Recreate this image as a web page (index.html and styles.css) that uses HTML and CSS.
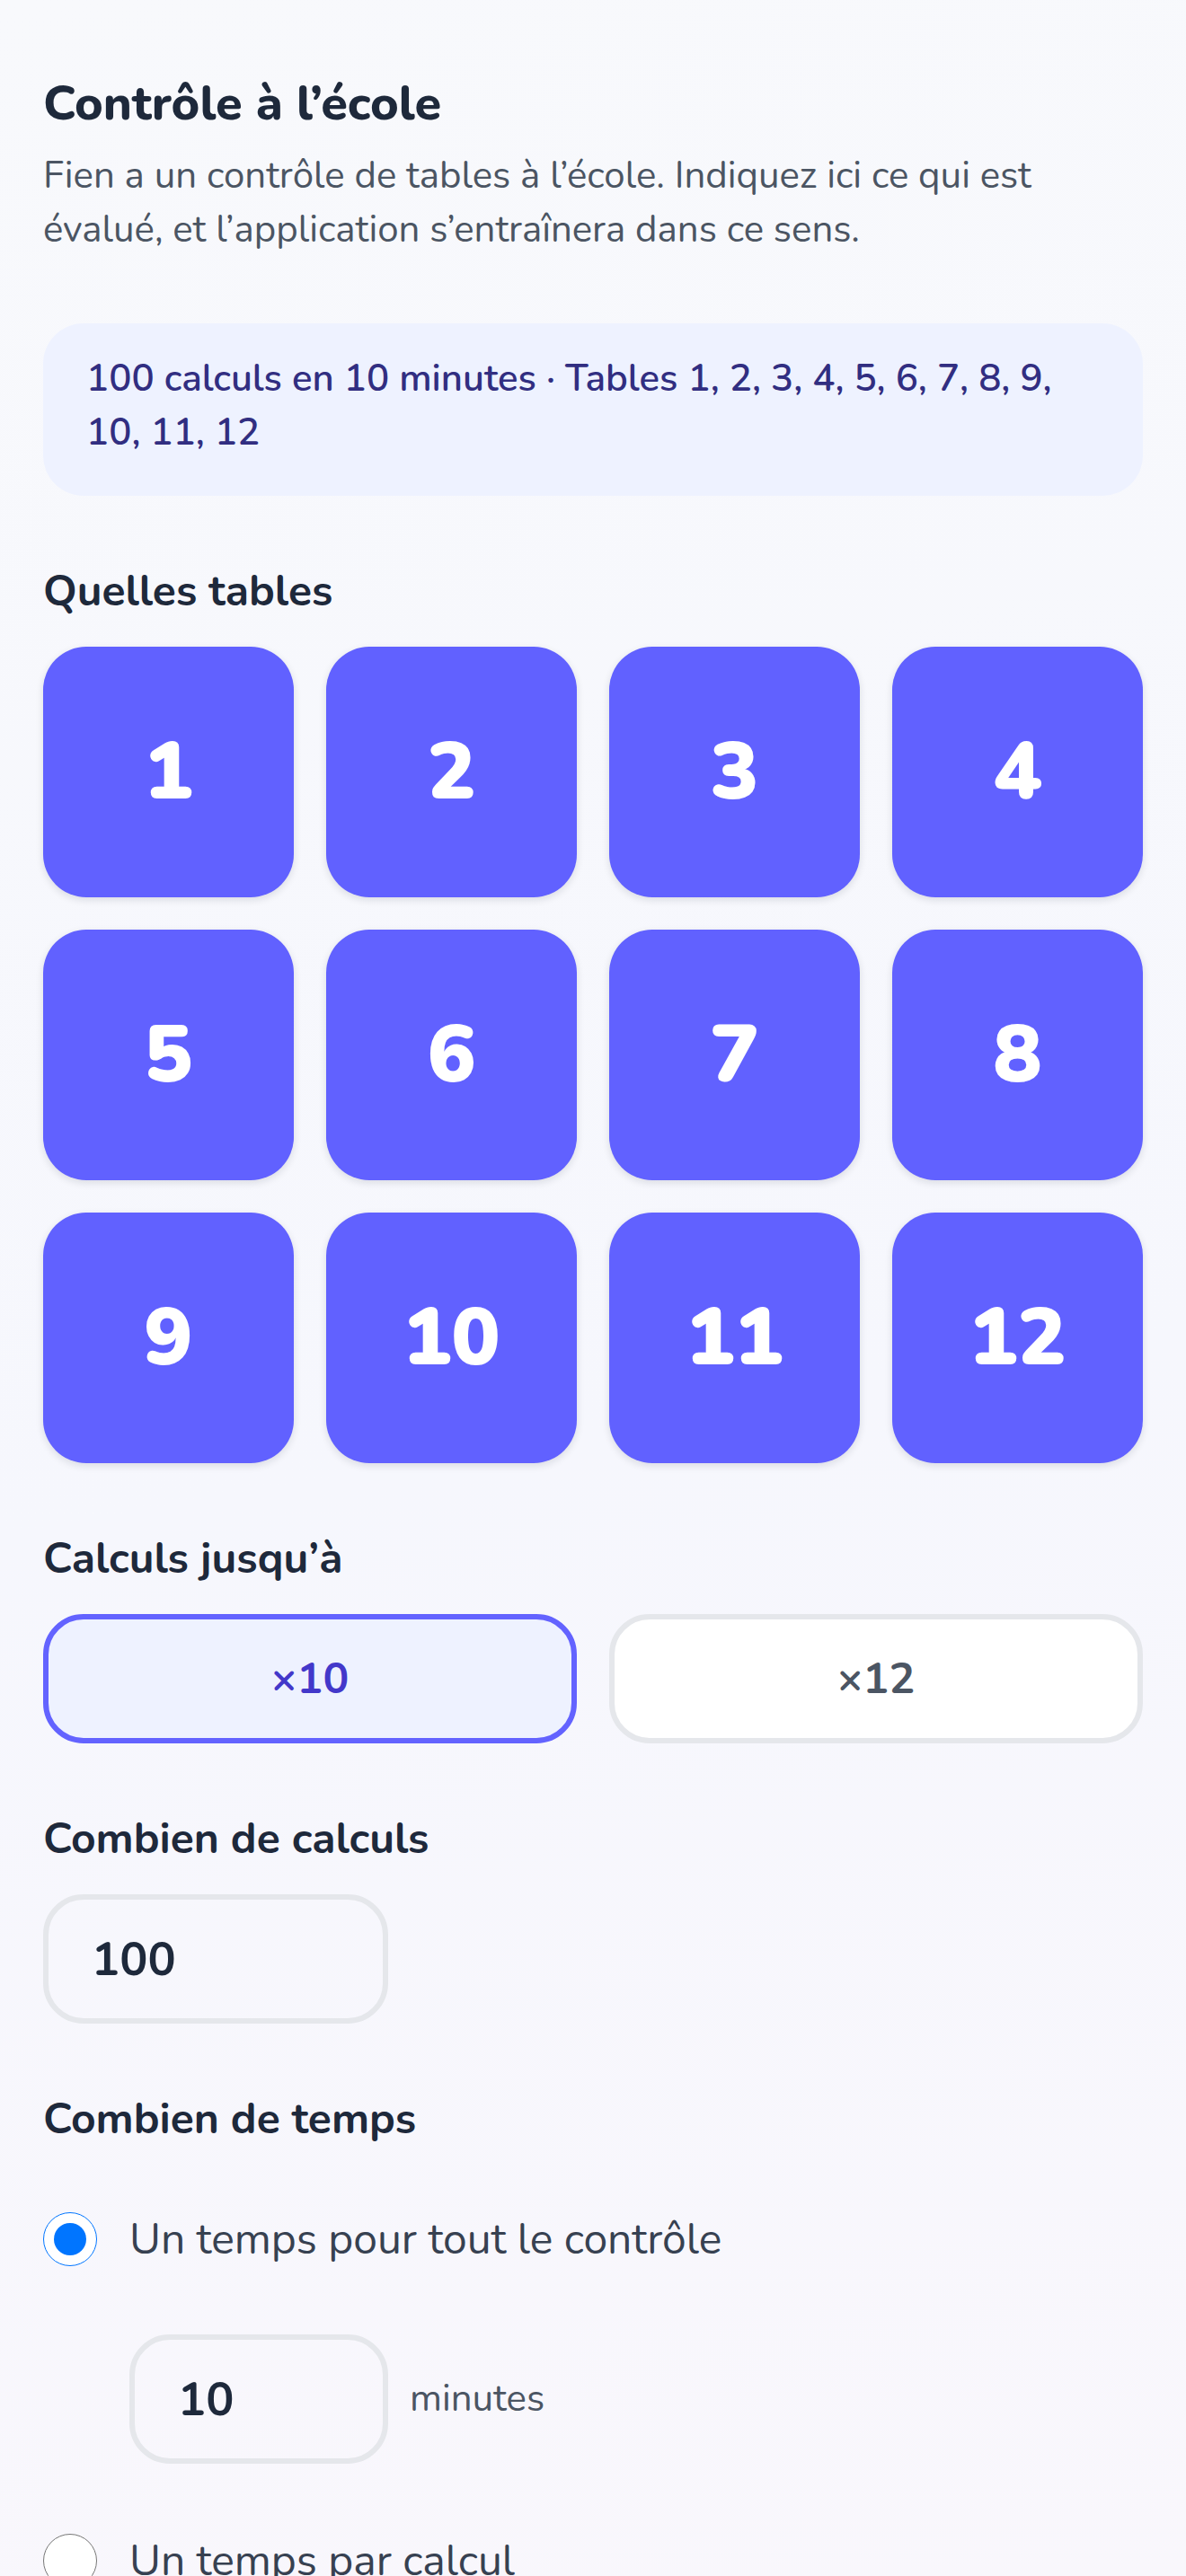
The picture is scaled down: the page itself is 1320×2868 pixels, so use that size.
FILE: index.html
```html
<!DOCTYPE html>
<html lang="fr">
<head>
<meta charset="utf-8">
<title>Contrôle à l’école</title>
<link rel="stylesheet" href="styles.css">
</head>
<body>
<main class="page">
  <h1 class="title">Contrôle à l’école</h1>
  <p class="intro">Fien a un contrôle de tables à l’école. Indiquez ici ce qui est évalué, et l’application s’entraînera dans ce sens.</p>

  <div class="summary">100 calculs en 10 minutes · Tables 1, 2, 3, 4, 5, 6, 7, 8, 9, 10, 11, 12</div>

  <section class="section">
    <h2 class="section-title">Quelles tables</h2>
    <div class="tables">
      <button class="table-btn" type="button">1</button>
      <button class="table-btn" type="button">2</button>
      <button class="table-btn" type="button">3</button>
      <button class="table-btn" type="button">4</button>
      <button class="table-btn" type="button">5</button>
      <button class="table-btn" type="button">6</button>
      <button class="table-btn" type="button">7</button>
      <button class="table-btn" type="button">8</button>
      <button class="table-btn" type="button">9</button>
      <button class="table-btn" type="button">10</button>
      <button class="table-btn" type="button">11</button>
      <button class="table-btn" type="button">12</button>
    </div>
  </section>

  <section class="section">
    <h2 class="section-title">Calculs jusqu’à</h2>
    <div class="choices">
      <button class="choice is-active" type="button">×10</button>
      <button class="choice" type="button">×12</button>
    </div>
  </section>

  <section class="section">
    <h2 class="section-title">Combien de calculs</h2>
    <input class="num-input" type="text" inputmode="numeric" value="100" aria-label="Combien de calculs">
  </section>

  <section class="section">
    <h2 class="section-title section-title--tight">Combien de temps</h2>
    <label class="radio-row">
      <input type="radio" name="mode" checked>
      <span>Un temps pour tout le contrôle</span>
    </label>
    <div class="duration">
      <input class="num-input num-input--small" type="text" inputmode="numeric" value="10" aria-label="Minutes">
      <span class="unit">minutes</span>
    </div>
    <label class="radio-row radio-row--next">
      <input type="radio" name="mode">
      <span>Un temps par calcul</span>
    </label>
  </section>
</main>
</body>
</html>
```

FILE: styles.css
```css
* {
  box-sizing: border-box;
}

html,
body {
  margin: 0;
}

body {
  min-height: 2868px;
  font-family: "Nunito", "Lato", sans-serif;
  color: #1e293b;
  background: linear-gradient(170deg, #f8f9fc 0%, #f6f7fd 55%, #f9f7fc 100%);
}

.page {
  padding: 73px 48px 0;
}

.title {
  margin: 0;
  font-size: 54px;
  line-height: 84px;
  font-weight: 800;
  color: #1e293b;
}

.intro {
  margin: 9px 0 0;
  font-size: 42px;
  line-height: 60px;
  color: #4b5563;
}

.summary {
  margin-top: 74px;
  padding: 32px 48px 40px;
  background: #eef2ff;
  border-radius: 45px;
  color: #312e81;
  font-size: 42px;
  line-height: 60px;
  font-weight: 600;
}

.section {
  margin-top: 70px;
}

.section-title {
  margin: 0 0 26px;
  font-size: 48px;
  line-height: 72px;
  font-weight: 700;
  color: #1e293b;
}

.section-title--tight {
  margin-bottom: 62px;
}

.tables {
  display: grid;
  grid-template-columns: repeat(4, 1fr);
  gap: 36px;
}

.table-btn {
  aspect-ratio: 1;
  padding: 0;
  border: 0;
  border-radius: 48px;
  background: #6161ff;
  color: #ffffff;
  font-family: "Nunito", "Lato", sans-serif;
  font-size: 90px;
  font-weight: 900;
  line-height: 1;
  box-shadow: 0 3px 8px rgba(15, 23, 42, 0.12);
}

.choices {
  display: grid;
  grid-template-columns: 1fr 1fr;
  gap: 36px;
}

.choice {
  height: 144px;
  padding: 0;
  border: 6px solid #e5e7eb;
  border-radius: 45px;
  background: #ffffff;
  color: #4b5563;
  font-family: "Nunito", "Lato", sans-serif;
  font-size: 48px;
  font-weight: 700;
}

.choice.is-active {
  border-color: #6363ff;
  background: #eef2ff;
  color: #4338ca;
}

.num-input {
  display: block;
  width: 384px;
  height: 144px;
  padding: 0 48px;
  border: 6px solid #e5e7eb;
  border-radius: 45px;
  background: transparent;
  color: #1e293b;
  font-family: "Nunito", "Lato", sans-serif;
  font-size: 52px;
  font-weight: 700;
  outline: none;
}

.num-input--small {
  width: 288px;
}

.radio-row {
  display: flex;
  align-items: center;
  gap: 36px;
  font-size: 48px;
  line-height: 72px;
  color: #374151;
}

.radio-row input {
  width: 60px;
  height: 60px;
  margin: 0;
  flex: none;
}

.radio-row--next {
  margin-top: 72px;
}

.duration {
  display: flex;
  align-items: center;
  gap: 24px;
  margin: 70px 0 0 96px;
}

.unit {
  font-size: 42px;
  line-height: 60px;
  color: #4b5563;
}
```
